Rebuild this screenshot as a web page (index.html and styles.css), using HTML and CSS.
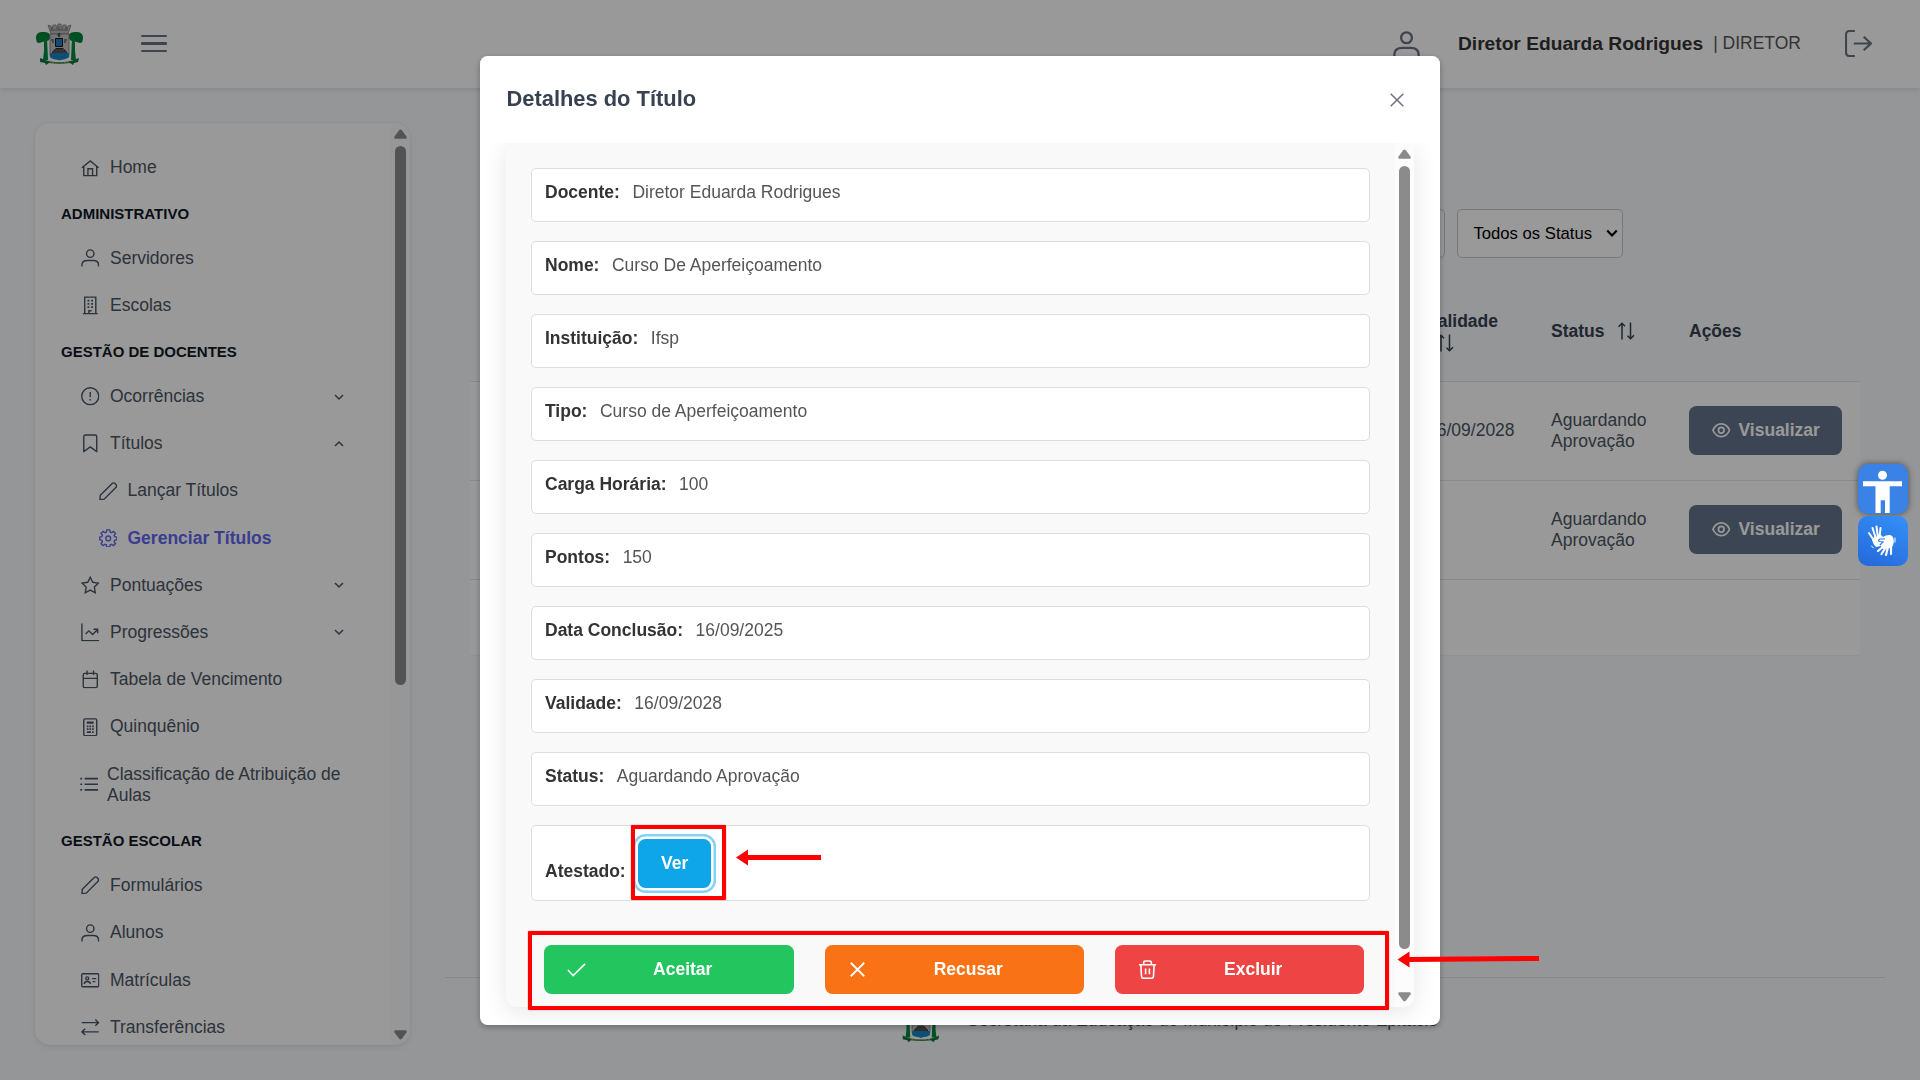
FILE: index.html
```html
<!DOCTYPE html>
<html lang="pt-BR">
<head>
<meta charset="utf-8">
<title>Gerenciar Títulos</title>
<link rel="stylesheet" href="styles.css">
</head>
<body>
<svg class="sprite" aria-hidden="true">
  <symbol id="crest" viewBox="0 0 47 42">
    <path d="M12 2l3 1 1 3 1-4h3l1 4 1-5h3l1 5 1-4h3l1 4 1-3 3-1-3 9H15z" fill="#b9b9b9" stroke="#777" stroke-width=".7"/>
    <path d="M14 7h18M16 4v3M23 3v4M30 4v3" stroke="#666" stroke-width=".8"/>
    <path d="M0 15c0-5 3-6 7-6s8 1 7 5c0 3-2 4-4 4l-7 2c-2 0-3-2-3-5zM47 15c0-5-3-6-7-6s-8 1-7 5c0 3 2 4 4 4l7 2c2 0 3-2 3-5z" fill="#00843b"/>
    <path d="M8 15h3l1 22H7l1-9zM36 15h3v13l1 9h-5z" fill="#008a3e"/>
    <path d="M14 11h19v20c0 4-6 5-9.500 6-4-1-9.500-2-9.500-6z" fill="#c4c4c4" stroke="#777" stroke-width=".8"/>
    <path d="M19.500 15.500h7v8h-7z" fill="#1685c6" stroke="#151515"/>
    <path d="M22 12l1-2 1 2-1 2zM15 17h3M28 17h3M16 19h2M28 19h2" stroke="#333" fill="none"/>
    <path d="M20 25h7l4 4v2H16v-2z" fill="#302d2b"/><path d="M19 27h9M17 29h13" stroke="#a5a09b" stroke-width=".7"/>
    <path d="M14 30h19v4c-3 3-7 2-9.500 3-3-1-7 0-9.500-3z" fill="#1685c6"/>
    <path d="M4 35l5 2c9 3 20 3 29 0l5-2-1 4-4 1-1 2-3-2c-7 1-14 1-21 0l-3 2-1-2-5-1z" fill="#18733c"/>
    <path d="M13 39c7 1 14 1 21 0" stroke="#91a65b" fill="none" stroke-dasharray="2 1"/>
  </symbol>
  <symbol id="home" viewBox="0 0 20 20"><path d="M1 9.500L10 2l9 7.500M3 8v10h14V8M7.500 18v-7.500h5V18"/></symbol>
  <symbol id="user" viewBox="0 0 20 20"><circle cx="10" cy="5" r="4"/><path d="M1 19v-1.500c0-3.500 2.500-5 6-5h6c3.500 0 6 1.500 6 5V19"/></symbol>
  <symbol id="building" viewBox="0 0 20 20"><path d="M4 19V1.200h12V19M2 19.200h16M8.500 19v-3h3"/><path d="M7 5h2M11 5h2M7 8.500h2M11 8.500h2M7 12h2M11 12h2" stroke-width="2"/></symbol>
  <symbol id="alert" viewBox="0 0 20 20"><circle cx="10" cy="10" r="9.200"/><path d="M10 5.500v5.500M10 13v1.600"/></symbol>
  <symbol id="bookmark" viewBox="0 0 20 20"><path d="M3 19V3c0-1.300.6-1.900 1.900-1.900h10.200c1.300 0 1.900.6 1.900 1.900v16l-7-5z"/></symbol>
  <symbol id="pencil" viewBox="0 0 20 20"><path d="M1 19l.4-4.600L14 1.800c1-1 2.300-1 3.300-.1l1 1c.9 1 .9 2.300-.1 3.300L5.600 18.600z"/></symbol>
  <symbol id="gear" viewBox="0 0 20 20"><path d="M8.400 1h3.200l.5 2.500 1.400.6 2.100-1.500 2.200 2.200-1.500 2.100.6 1.400 2.300.5v2.900l-2.300.6-.6 1.400 1.500 2.100-2.200 2.200-2.100-1.500-1.400.6-.5 2.400H8.400l-.5-2.400-1.400-.6L4.400 18l-2.200-2.200 1.500-2.100-.6-1.400-2.300-.6V8.800l2.300-.5.6-1.400-1.500-2.100 2.200-2.200 2.100 1.500 1.400-.6z"/><circle cx="10" cy="10.200" r="2.600"/></symbol>
  <symbol id="star" viewBox="0 0 20 20"><path d="M10 1.300l2.700 5.500 6.100.9-4.400 4.300 1 6.100-5.400-2.900-5.400 2.900 1-6.100L1.200 7.700l6.100-.9z"/></symbol>
  <symbol id="chart" viewBox="0 0 20 20"><path d="M1 .5V19h18.500M5 12l3.500-3.500 4 4L18 7M13.500 6.700H18v4.500"/></symbol>
  <symbol id="calendar" viewBox="0 0 20 20"><path d="M4 3.700h12c1 0 1.600.6 1.600 1.600v12c0 1-.6 1.700-1.600 1.700H4c-1 0-1.600-.7-1.600-1.700v-12c0-1 .6-1.600 1.600-1.600zM2.400 9h15.200M6.500.5v5M13.500.5v5"/></symbol>
  <symbol id="calc" viewBox="0 0 20 20"><rect x="3" y="1" width="14" height="18" rx="1.500"/><path d="M6.300 5h7.400" stroke-width="2.200"/><path d="M6.300 9h1.800M9.100 9h1.800M12 9h1.800M6.300 12h1.800M9.100 12h1.800M12 12h1.800M6.300 15.200h4.600M12 15.200h1.800" stroke-width="1.900"/></symbol>
  <symbol id="list" viewBox="0 0 20 20"><path d="M5 4h15M5 10h15M5 16h15M.3 4h2M.3 10h2M.3 16h2" stroke-width="1.800"/></symbol>
  <symbol id="card" viewBox="0 0 20 20"><rect x=".8" y="3" width="18.400" height="14" rx="1"/><circle cx="6.800" cy="8" r="1.600"/><path d="M3.500 14c0-2 1.200-2.600 3.300-2.600s3.300.6 3.300 2.600M12 8.300h4.500M12.500 11.500h3"/></symbol>
  <symbol id="swap" viewBox="0 0 20 20"><path d="M.8 5h18M15.500 1.700L19 5l-3.500 3.300M19.200 15H1.200M4.500 11.700L1 15l3.500 3.300"/></symbol>
  <symbol id="down" viewBox="0 0 10 10"><path d="M1 3l4 4 4-4"/></symbol>
  <symbol id="up" viewBox="0 0 10 10"><path d="M1 7l4-4 4 4"/></symbol>
  <symbol id="x" viewBox="0 0 14 14"><path d="M.7.7l12.600 12.600M13.300.7L.7 13.300"/></symbol>
  <symbol id="check" viewBox="0 0 20 20"><path d="M1 10.500l5.500 5.800L19 4"/></symbol>
  <symbol id="trash" viewBox="0 0 20 20"><path d="M1 5h18M3 5l.7 12.300c.1 1.300.7 1.900 2 1.900h8.600c1.300 0 1.900-.6 2-1.900L17 5M6 5V2.700C6 1.500 6.500 1 7.700 1h4.600c1.200 0 1.700.5 1.700 1.700V5M8 9v6M12 9v6"/></symbol>
  <symbol id="eye" viewBox="0 0 20 20"><path d="M1 10c2-4.500 5.200-6.800 9-6.800s7 2.300 9 6.800c-2 4.500-5.200 6.800-9 6.800S3 14.500 1 10z"/><circle cx="10" cy="10" r="3"/></symbol>
  <symbol id="sort" viewBox="0 0 18 18"><path d="M5 17.500V1.500M1.500 4.800L5 1.300l3 3M13.500.5v16M10.500 13.700l3 3 3.500-3.500"/></symbol>
  <symbol id="exit" viewBox="0 0 26 26"><path d="M9.500 1H4C2.200 1 1 2.200 1 4v18c0 1.800 1.200 3 3 3h5.500M8.500 13H25M18 6.500l7 6.500-7 6.500"/></symbol>
  <symbol id="tri" viewBox="0 0 13 10"><path d="M5.200 1.200q1.300-1.600 2.600 0l4.700 6.300q.8 2.300-1.200 2.300H1.700Q-.3 9.800.5 7.500z"/></symbol>
</svg>

<header class="topbar">
  <svg class="logo"><use href="#crest"/></svg>
  <div class="burger"><i></i><i></i><i></i></div>
  <div class="account">
    <svg class="ico account-user"><use href="#user"/></svg>
    <b class="account-name">Diretor Eduarda Rodrigues</b><span class="account-role">| DIRETOR</span>
    <svg class="ico account-exit"><use href="#exit"/></svg>
  </div>
</header>

<div class="layout">
  <aside class="sidebar">
    <nav class="menu">
      <a class="item first"><svg class="ico"><use href="#home"/></svg>Home</a>
      <h6 class="group">ADMINISTRATIVO</h6>
      <a class="item"><svg class="ico"><use href="#user"/></svg>Servidores</a>
      <a class="item"><svg class="ico"><use href="#building"/></svg>Escolas</a>
      <h6 class="group">GESTÃO DE DOCENTES</h6>
      <a class="item"><svg class="ico"><use href="#alert"/></svg>Ocorrências<svg class="ico chevron"><use href="#down"/></svg></a>
      <a class="item"><svg class="ico"><use href="#bookmark"/></svg>Títulos<svg class="ico chevron"><use href="#up"/></svg></a>
      <a class="item sub"><svg class="ico"><use href="#pencil"/></svg>Lançar Títulos</a>
      <a class="item sub active"><svg class="ico"><use href="#gear"/></svg>Gerenciar Títulos</a>
      <a class="item"><svg class="ico"><use href="#star"/></svg>Pontuações<svg class="ico chevron"><use href="#down"/></svg></a>
      <a class="item"><svg class="ico"><use href="#chart"/></svg>Progressões<svg class="ico chevron"><use href="#down"/></svg></a>
      <a class="item"><svg class="ico"><use href="#calendar"/></svg>Tabela de Vencimento</a>
      <a class="item"><svg class="ico"><use href="#calc"/></svg>Quinquênio</a>
      <a class="item wide"><svg class="ico"><use href="#list"/></svg><span>Classificação de Atribuição de<br>Aulas</span></a>
      <h6 class="group last">GESTÃO ESCOLAR</h6>
      <a class="item"><svg class="ico"><use href="#pencil"/></svg>Formulários</a>
      <a class="item"><svg class="ico"><use href="#user"/></svg>Alunos</a>
      <a class="item"><svg class="ico"><use href="#card"/></svg>Matrículas</a>
      <a class="item"><svg class="ico"><use href="#swap"/></svg>Transferências</a>
    </nav>
    <div class="scroll">
      <svg class="scroll-arrow"><use href="#tri"/></svg>
      <div class="scroll-thumb menu-thumb"></div>
      <svg class="scroll-arrow flip"><use href="#tri"/></svg>
    </div>
  </aside>

  <main class="main">
    <div class="filters">
      <div class="search"></div>
      <div class="select">Todos os Status<svg class="ico"><use href="#down"/></svg></div>
    </div>
    <div class="table">
      <div class="row head">
        <div class="cell"></div>
        <div class="cell stacked">Validade<br><svg class="ico sort"><use href="#sort"/></svg></div>
        <div class="cell inline">Status<svg class="ico sort"><use href="#sort"/></svg></div>
        <div class="cell">Ações</div>
      </div>
      <div class="row">
        <div class="cell"></div>
        <div class="cell">16/09/2028</div>
        <div class="cell">Aguardando<br>Aprovação</div>
        <div class="cell"><div class="view"><svg class="ico"><use href="#eye"/></svg>Visualizar</div></div>
      </div>
      <div class="row">
        <div class="cell"></div>
        <div class="cell"></div>
        <div class="cell">Aguardando<br>Aprovação</div>
        <div class="cell"><div class="view"><svg class="ico"><use href="#eye"/></svg>Visualizar</div></div>
      </div>
      <div class="pager"></div>
    </div>
    <footer class="footer">
      <svg class="footer-logo"><use href="#crest"/></svg>
      <span>Secretaria da Educação do Município de Presidente Epitácio</span>
    </footer>
  </main>
</div>

<div class="overlay">
  <section class="modal">
    <div class="modal-head"><h2 class="modal-title">Detalhes do Título</h2><svg class="ico close"><use href="#x"/></svg></div>
    <div class="modal-body">
      <div class="panel">
        <div class="details">
          <div class="field"><b>Docente:</b><span>Diretor Eduarda Rodrigues</span></div>
          <div class="field"><b>Nome:</b><span>Curso De Aperfeiçoamento</span></div>
          <div class="field"><b>Instituição:</b><span>Ifsp</span></div>
          <div class="field"><b>Tipo:</b><span>Curso de Aperfeiçoamento</span></div>
          <div class="field"><b>Carga Horária:</b><span>100</span></div>
          <div class="field"><b>Pontos:</b><span>150</span></div>
          <div class="field"><b>Data Conclusão:</b><span>16/09/2025</span></div>
          <div class="field"><b>Validade:</b><span>16/09/2028</span></div>
          <div class="field"><b>Status:</b><span>Aguardando Aprovação</span></div>
          <div class="field file"><b>Atestado:</b><div class="see">Ver</div></div>
          <div class="actions">
            <div class="action accept"><svg class="ico"><use href="#check"/></svg><span>Aceitar</span></div>
            <div class="action refuse"><svg class="ico"><use href="#x"/></svg><span>Recusar</span></div>
            <div class="action remove"><svg class="ico"><use href="#trash"/></svg><span>Excluir</span></div>
          </div>
        </div>
        <div class="scroll">
          <svg class="scroll-arrow"><use href="#tri"/></svg>
          <div class="scroll-thumb panel-thumb"></div>
          <svg class="scroll-arrow flip"><use href="#tri"/></svg>
        </div>
      </div>
    </div>
  </section>
</div>

<div class="mark mark-see"></div>
<div class="mark mark-actions"></div>
<svg class="arrows" viewBox="0 0 1920 1080">
  <path d="M736 857.500l12-8v16z"/><path d="M747 855h74v5h-74z"/>
  <path d="M1397.500 959.500l12-8v16z"/><path d="M1408 957l131-1v5l-131 1z"/>
</svg>

<div class="access">
  <div class="access-btn person">
    <svg viewBox="0 0 50 50"><path fill="#fff" d="M24.500 6.700a4.500 4.500 0 110 9 4.500 4.500 0 010-9zM5 17.200h39v5H31.700V49H27V36.300h-4.300V49h-5.200V22.200H5z"/></svg>
  </div>
  <div class="access-btn hands">
    <svg viewBox="0 0 50 50"><g fill="none" stroke="#fff" stroke-linecap="round"><path d="M17 26L11 17M18 23L14.500 12M20 22L18.500 10.500M21.500 22L22.500 12" stroke-width="2"/><path d="M26 30l-6 5M28 31l-4.500 7M30 31l-2 8M33 30v8" stroke-width="2.200"/><path d="M13.500 30l2 2M37 22v4" stroke-width="1"/></g><path fill="#fff" d="M14 22l9-3 2 2c3-2 7-3 9-1 3 3 2 10-1 12l-8 1-2-3-5 1c-2-2-3-4-4-7z"/><path d="M27 23h-5c-2 1-2 2 0 2.500l3 .5-3 3" fill="none" stroke="#2b78e8" stroke-width="1.200"/></svg>
  </div>
</div>
</body>
</html>
```
FILE: styles.css
```css
* { box-sizing: border-box; }
body {
  margin: 0;
  height: 1080px;
  overflow: hidden;
  background: #f8fafc;
  color: #4b5563;
  font: 17.5px/21px "Liberation Sans", Arial, sans-serif;
}
.sprite { position: absolute; width: 0; height: 0; }
.ico { fill: none; stroke: currentColor; stroke-width: 1.5; flex: none; }

/* top bar */
.topbar {
  position: relative;
  display: flex;
  align-items: center;
  height: 88px;
  padding: 0 35px 0 36px;
  background: #fff;
  box-shadow: 0 2px 5px rgba(0, 0, 0, .1);
}
.logo { width: 47px; height: 42px; }
.burger { display: flex; flex-direction: column; gap: 5px; width: 26px; margin: 0 0 1px 58px; }
.burger i { height: 2.500px; border-radius: 1px; background: #6b7280; }
.account { display: flex; align-items: center; margin-left: auto; padding: 0 13px 2px 0; }
.account-user { width: 27px; height: 27px; margin: 2px 38px 0 0; color: #6b7280; stroke-width: 1.700; }
.account-name { font-size: 19.200px; color: #333; }
.account-role { margin-left: 10px; color: #555; white-space: pre; }
.account-exit { width: 27px; height: 27px; margin-left: 44px; color: #6b7280; stroke-width: 2; }

/* sidebar */
.layout { display: flex; gap: 35px; padding-left: 35px; }
.sidebar {
  display: flex;
  flex: none;
  width: 375px;
  height: 922px;
  margin-top: 35px;
  overflow: hidden;
  border-radius: 15px;
  background: #fff;
  box-shadow: 0 3px 6px rgba(0, 0, 0, .06), 0 0 3px rgba(0, 0, 0, .08);
}
.menu { flex: 1; padding: 20.400px 41px 0 26px; }
.item { display: flex; align-items: center; height: 47.200px; padding-left: 20px; }
.item.first { padding-top: 2px; }
.item .ico { width: 18.500px; height: 18.500px; margin-right: 10.500px; }
.item.sub { padding-left: 37.500px; }
.item.active { color: #6366f1; font-weight: bold; }
.item.wide { height: 68.200px; padding-left: 18.500px; white-space: nowrap; }
.item.wide .ico { margin-right: 9px; }
.item .chevron { width: 10px; height: 10px; margin: 0 6px 0 auto; }
.group { display: flex; align-items: center; height: 44px; margin: 0; padding-top: 1px; font-size: 15px; color: #111827; }
.group.last { height: 43.400px; padding-top: 0; }
.scroll {
  display: flex;
  flex: none;
  flex-direction: column;
  align-items: center;
  width: 19px;
  padding: 6px 0 5px;
  background: #fcfcfc;
}
.scroll-arrow { width: 13px; height: 10px; fill: #8b8b8b; }
.flip { margin-top: auto; transform: scaleY(-1); }
.scroll-thumb { width: 11px; margin-top: 7px; border-radius: 6px; background: #8b8b8b; }
.menu-thumb { height: 539px; }
.panel-thumb { height: 783px; }

/* list page */
.main { display: flex; flex: 1; flex-direction: column; padding-top: 121px; }
.filters { display: flex; gap: 12.500px; height: 48.500px; margin-left: 655px; }
.search { width: 344.500px; border: 1px solid #c8c8c8; border-radius: 5px; background: #fff; }
.select {
  display: flex;
  align-items: center;
  justify-content: space-between;
  width: 166px;
  padding: 0 4.500px 0 15.500px;
  border: 1px solid #c8c8c8;
  border-radius: 5px;
  background: #fff;
  color: #000;
  font-size: 16.670px;
}
.select .ico { width: 12px; height: 12px; stroke-width: 1.800; }
.table { width: 1390px; margin: 24px 0 0 25px; }
.row {
  display: grid;
  grid-template-columns: 939.500px 124px 138px 188.500px;
  align-items: center;
  height: 99px;
  border-bottom: 1px solid #e2e4e8;
  background: #fff;
}
.row.head { height: 100px; background: none; color: #374151; font-weight: bold; }
.cell { padding-left: 17.500px; }
.cell.inline { display: flex; align-items: center; gap: 13px; }
.cell.stacked { padding-top: 2px; }
.sort { display: inline-block; width: 18px; height: 18px; vertical-align: middle; }
.cell > br + .sort { margin-left: 9px; }
.view {
  display: flex;
  align-items: center;
  width: 153px;
  height: 49px;
  padding-left: 23px;
  border-radius: 7.500px;
  background: #64748b;
  color: #fff;
  font-weight: bold;
}
.view .ico { width: 18.500px; height: 18.500px; margin-right: 8px; stroke-width: 1.900; }
.pager { height: 76px; border-bottom: 1px solid #f1f3f5; background: #fff; }
.footer {
  display: flex;
  justify-content: center;
  gap: 24px;
  height: 103px;
  margin: 321px 35px 0 0;
  padding: 24px 0 0 7px;
  border-top: 1px solid #dfe3e8;
}
.footer-logo { width: 44px; height: 41px; }
.footer span { padding-top: 8px; }

/* dialog */
.overlay {
  position: fixed;
  inset: 0;
  display: flex;
  justify-content: center;
  padding-top: 56px;
  background: rgba(0, 0, 0, .4);
}
.modal {
  display: flex;
  flex-direction: column;
  width: 960px;
  height: 969px;
  overflow: hidden;
  border-radius: 7.500px;
  background: #fff;
  box-shadow: 0 2px 6px rgba(0, 0, 0, .3);
}
.modal-head { display: flex; align-items: center; height: 87px; padding: 0 36px 0 26.500px; }
.modal-title { margin: 0 0 2px; font-size: 21.880px; color: #374151; }
.close { width: 14px; height: 14px; margin-left: auto; color: #6b7280; }
.modal-body { flex: 1; padding: 0 26px; overflow: hidden; }
.panel {
  display: flex;
  height: 864px;
  overflow: hidden;
  border-radius: 0 0 10px 10px;
  background: #f9f9f9;
  box-shadow: 0 5px 25px rgba(0, 0, 0, .1);
}
.details { flex: 1; padding: 25px; }
.field {
  display: flex;
  gap: 12.500px;
  height: 54px;
  margin-bottom: 19px;
  padding: 12.500px 13px;
  border: 1px solid #ddd;
  border-radius: 5px;
  background: #fff;
  color: #555;
}
.field b { color: #333; }
.file { height: 76px; }
.file b { padding-top: 22px; }
.see {
  width: 73px;
  height: 49px;
  border-radius: 7.500px;
  background: #0ea5e9;
  box-shadow: 0 0 0 2.500px #fff, 0 0 0 5px #84d1f9;
  color: #fff;
  font-weight: bold;
  line-height: 48px;
  text-align: center;
}
.actions { display: flex; padding: 25px 6px 0 13px; }
.action {
  display: flex;
  align-items: center;
  width: 250px;
  height: 49px;
  padding: 0 14px 0 22.500px;
  border-radius: 7.500px;
  color: #fff;
  font-weight: bold;
}
.action .ico { width: 19px; height: 19px; stroke-width: 1.700; }
.action span { flex: 1; text-align: center; }
.accept { background: #22c55e; }
.refuse { width: 259px; margin-left: 31px; background: #f97316; }
.refuse .ico { width: 15px; height: 15px; margin: 0 2px; }
.remove { width: 249px; margin-left: 31px; background: #ef4444; }

/* callouts */
.mark { position: absolute; border: 4px solid #f00; box-shadow: 0 0 1px #f00; border-radius: 1px; }
.mark-see { left: 631px; top: 825px; width: 95px; height: 75px; }
.mark-actions { left: 528px; top: 931px; width: 861px; height: 79px; }
.arrows { position: absolute; left: 0; top: 0; width: 1920px; height: 1080px; fill: #f00; }

/* accessibility buttons */
.access { position: absolute; right: 12px; top: 464px; display: flex; flex-direction: column; gap: 2px; }
.access-btn { width: 50px; height: 50px; border-radius: 10px; }
.access-btn svg { display: block; width: 50px; height: 50px; }
.person { background: #3b82e6; box-shadow: 0 0 6px rgba(0, 0, 0, .5); }
.hands { background: linear-gradient(25deg, #2468d8, #3490fa); }
```
